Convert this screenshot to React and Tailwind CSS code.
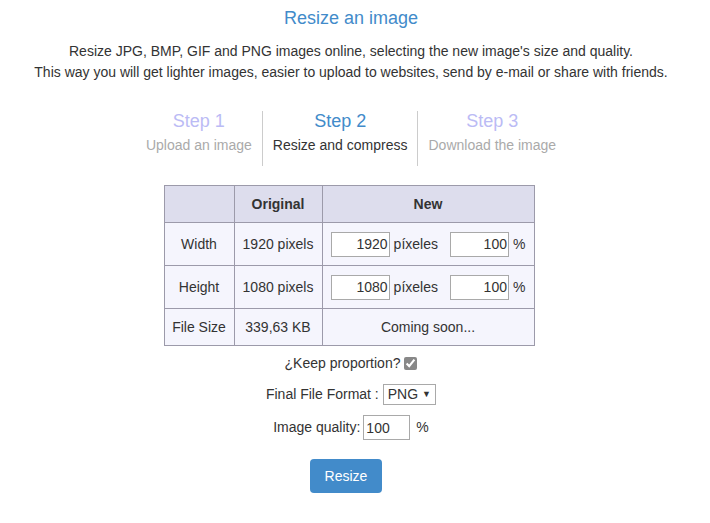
import React from "react";

const App = () => {
  return (
    <div className="w-[710px] min-h-[523px] pr-[8px] bg-white text-[#333] text-[14px] font-['Liberation_Sans',Arial,sans-serif] text-center">
      <h1 className="pt-[7px] text-[18px] leading-[22px] text-[#428bca]">Resize an image</h1>
      <p className="mt-[12px] leading-[21px]">
        Resize JPG, BMP, GIF and PNG images online, selecting the new image's size and quality.
        <br />
        This way you will get lighter images, easier to upload to websites, send by e-mail or share with friends.
      </p>

      <div className="mt-[28px] flex justify-center">
        <div className="px-[10px] pb-[11px] w-[126px] mr-[-10px]">
          <div className="text-[18px] leading-[20px] text-[#bbbbf5]">Step 1</div>
          <div className="mt-[4px] leading-[20px] text-[#aaa] whitespace-nowrap">Upload an image</div>
        </div>
        <div className="px-[10px] pb-[11px] border-x border-[#ccc] ml-[10px]">
          <div className="text-[18px] leading-[20px] text-[#428bca]">Step 2</div>
          <div className="mt-[4px] leading-[20px] whitespace-nowrap">Resize and compress</div>
        </div>
        <div className="px-[10px] pb-[11px]">
          <div className="text-[18px] leading-[20px] text-[#bbbbf5]">Step 3</div>
          <div className="mt-[4px] leading-[20px] text-[#aaa] whitespace-nowrap">Download the image</div>
        </div>
      </div>

      <div className="mt-[19px] flex justify-center pr-[4px]">
        <table className="border-collapse w-[371px]">
          <tbody>
            <tr className="bg-[#dddded] h-[37px]">
              <th className="w-[70px] border border-[#9c9aaa]"></th>
              <th className="w-[88px] border border-[#9c9aaa] font-bold">Original</th>
              <th className="border border-[#9c9aaa] font-bold">New</th>
            </tr>
            {[
              ["Width", "1920 pixels", "1920"],
              ["Height", "1080 pixels", "1080"],
            ].map(([label, orig, val]) => (
              <tr key={label} className="bg-[#f5f5fd] h-[43px]">
                <td className="border border-[#9c9aaa]">{label}</td>
                <td className="border border-[#9c9aaa]">{orig}</td>
                <td className="border border-[#9c9aaa]">
                  <div className="flex items-center justify-center">
                    <input
                      readOnly
                      value={val}
                      className="w-[59px] h-[25px] border border-[#a9a9a9] bg-white text-right pr-[1px] outline-none"
                    />
                    <span className="ml-[4px] mr-[12px]">píxeles</span>
                    <input
                      readOnly
                      value="100"
                      className="w-[59px] h-[25px] border border-[#a9a9a9] bg-white text-right pr-[1px] outline-none"
                    />
                    <span className="ml-[4px]">%</span>
                  </div>
                </td>
              </tr>
            ))}
            <tr className="bg-[#f5f5fd] h-[37px]">
              <td className="border border-[#9c9aaa]">File Size</td>
              <td className="border border-[#9c9aaa]">339,63 KB</td>
              <td className="border border-[#9c9aaa]">Coming soon...</td>
            </tr>
          </tbody>
        </table>
      </div>

      <div className="mt-[7px] flex items-center justify-center h-[20px]">
        <span>¿Keep proportion?</span>
        <input type="checkbox" readOnly checked className="ml-[4px] w-[13px] h-[13px] accent-[#888]" />
      </div>

      <div className="mt-[11px] flex items-center justify-center h-[21px]">
        <span>Final File Format :</span>
        <div className="ml-[4px] h-[21px] border border-[#a9a9a9] flex items-center pl-[4px] pr-[4px]">
          <span>PNG</span>
          <span className="ml-[4px] text-[9px]">▼</span>
        </div>
      </div>

      <div className="mt-[10px] flex items-center justify-center h-[25px]">
        <span>Image quality:</span>
        <input
          readOnly
          value="100"
          className="ml-[3px] w-[47px] h-[25px] border border-[#a9a9a9] bg-white pl-[2px] outline-none"
        />
        <span className="ml-[6px]">%</span>
      </div>

      <div className="mt-[19px] flex justify-center pr-[10px]">
        <button className="w-[72px] h-[34px] rounded-[4px] bg-[#428bca] text-white text-[14px]">
          Resize
        </button>
      </div>
    </div>
  );
};

export default App;
